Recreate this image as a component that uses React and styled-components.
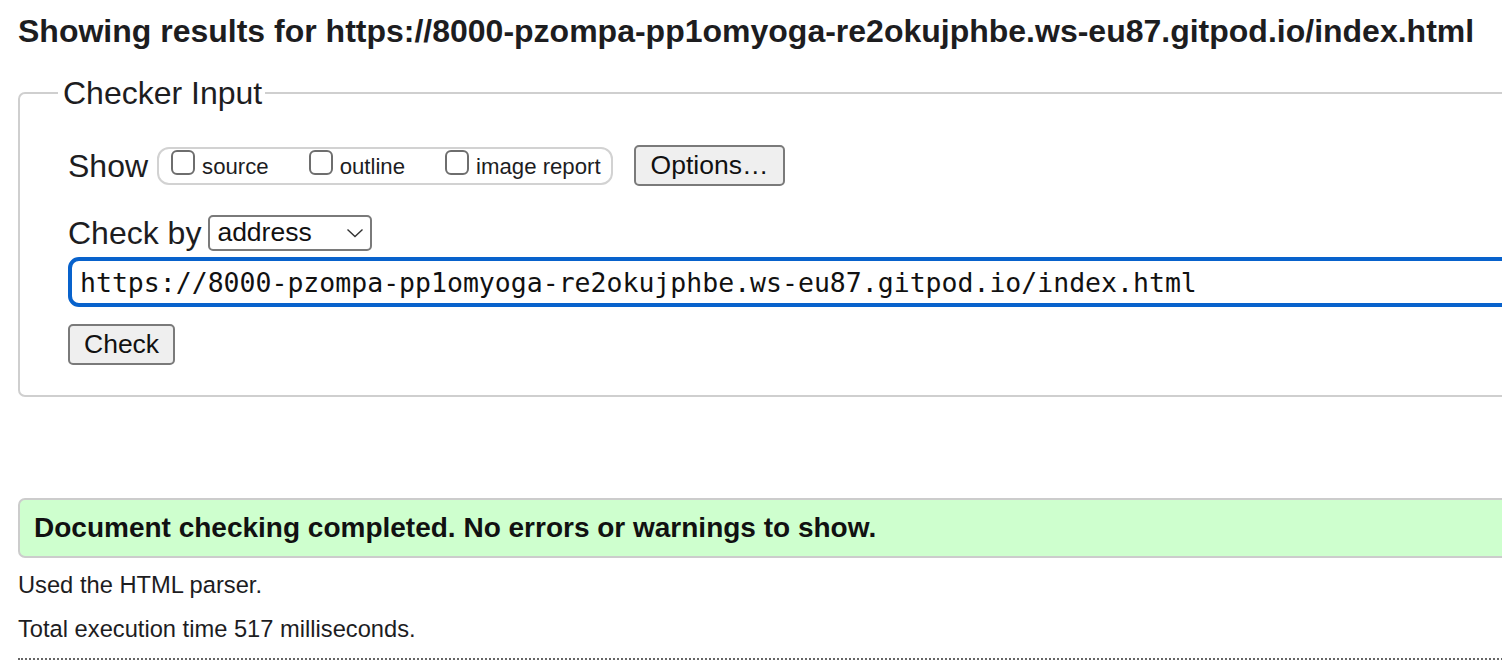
import React from 'react';
import styled, { createGlobalStyle } from 'styled-components';

const GlobalStyle = createGlobalStyle`
  html, body {
    margin: 0;
    padding: 0;
    overflow: hidden;
    background: #fff;
  }
  body {
    font-family: "Liberation Sans", Arial, sans-serif;
    color: #1d1d1f;
  }
`;

const url = 'https://8000-pzompa-pp1omyoga-re2okujphbe.ws-eu87.gitpod.io/index.html';

const App = () => {
    return (
        <>
            <GlobalStyle />
            <Page>
                <Title>Showing results for {url}</Title>

                <Fieldset>
                    <Legend>Checker Input</Legend>

                    <Row>
                        <RowLabel>Show</RowLabel>
                        <CheckGroup>
                            <CheckItem><Box />source</CheckItem>
                            <CheckItem><Box />outline</CheckItem>
                            <CheckItem><Box />image report</CheckItem>
                        </CheckGroup>
                        <Button $ml={21}>Options…</Button>
                    </Row>

                    <Row $mt={29}>
                        <RowLabel $gap={7}>Check by</RowLabel>
                        <Select>
                            <span>address</span>
                            <svg width="18" height="10" viewBox="0 0 18 10">
                                <path d="M1.5 1.5 L9 8.5 L16.5 1.5" fill="none" stroke="#333" strokeWidth="1.4" />
                            </svg>
                        </Select>
                    </Row>

                    <UrlInput>{url}</UrlInput>

                    <Button $mt={17} $pad={14}>Check</Button>
                </Fieldset>

                <Success>Document checking completed. No errors or warnings to show.</Success>
                <Note $mt={12}>Used the HTML parser.</Note>
                <Note $mt={14}>Total execution time 517 milliseconds.</Note>
                <Dotted />
            </Page>
        </>
    );
};

export default App;

// Styled components
const Page = styled.div`
    width: 1560px;
    padding-left: 18px;
`;

const Title = styled.h2`
    margin: 0;
    padding-top: 12px;
    font-size: 32px;
    line-height: 38px;
    font-weight: bold;
    color: #1d1d1f;
    white-space: nowrap;
`;

const Fieldset = styled.fieldset`
    margin: 28px 0 0 0;
    padding: 37px 0 30px 48px;
    border: 2px solid #cfcfcf;
    border-radius: 7px;
    display: flex;
    flex-direction: column;
    align-items: flex-start;
`;

const Legend = styled.legend`
    margin-left: -10px;
    padding: 0 3px 0 5px;
    font-size: 32px;
    line-height: 30px;
`;

const Row = styled.div`
    display: flex;
    align-items: center;
    margin-top: ${p => p.$mt || 0}px;
`;

const RowLabel = styled.span`
    font-size: 32px;
    line-height: 36px;
    margin-right: ${p => p.$gap || 9}px;
`;

const CheckGroup = styled.div`
    display: flex;
    align-items: center;
    gap: 40px;
    height: 38px;
    box-sizing: border-box;
    padding: 0 10px 0 12px;
    border: 2px solid #d2d2d2;
    border-radius: 12px;
`;

const CheckItem = styled.label`
    display: flex;
    align-items: center;
    font-size: 22.2px;
    padding-top: 3px;
`;

const Box = styled.span`
    width: 24px;
    height: 25px;
    margin-right: 7px;
    margin-top: -10px;
    border: 2px solid #6e6e6e;
    border-radius: 6px;
    box-sizing: border-box;
    background: #fff;
`;

const Button = styled.button`
    margin-left: ${p => p.$ml || 0}px;
    margin-top: ${p => p.$mt || 0}px;
    height: 41px;
    padding: 0 ${p => p.$pad || 15}px;
    font-family: "Liberation Sans", Arial, sans-serif;
    font-size: 26.5px;
    color: #111;
    background: #efefef;
    border: 2px solid #7a7a7a;
    border-radius: 5px;
`;

const Select = styled.div`
    display: flex;
    align-items: center;
    justify-content: space-between;
    width: 164px;
    height: 36px;
    box-sizing: border-box;
    padding: 0 6px 1px 7px;
    border: 2px solid #7a7a7a;
    border-radius: 5px;
    font-size: 26.5px;
    color: #111;
`;

const UrlInput = styled.div`
    margin-top: 6px;
    width: 1500px;
    height: 50px;
    box-sizing: border-box;
    display: flex;
    align-items: center;
    padding-left: 8px;
    border: 4px solid #0862cc;
    border-radius: 11px;
    font-family: "DejaVu Sans Mono", "Liberation Mono", monospace;
    font-size: 26.5px;
    color: #111;
    white-space: nowrap;
`;

const Success = styled.div`
    margin-top: 101px;
    height: 60px;
    box-sizing: border-box;
    display: flex;
    align-items: center;
    padding-left: 14px;
    background: #ceffce;
    border: 2px solid #cccccc;
    border-radius: 7px;
    font-size: 28px;
    font-weight: bold;
    color: #111;
`;

const Note = styled.p`
    margin: ${p => p.$mt}px 0 0 0;
    font-size: 23.7px;
    line-height: 30px;
`;

const Dotted = styled.div`
    margin-top: 14px;
    border-top: 2px dotted #666;
`;
